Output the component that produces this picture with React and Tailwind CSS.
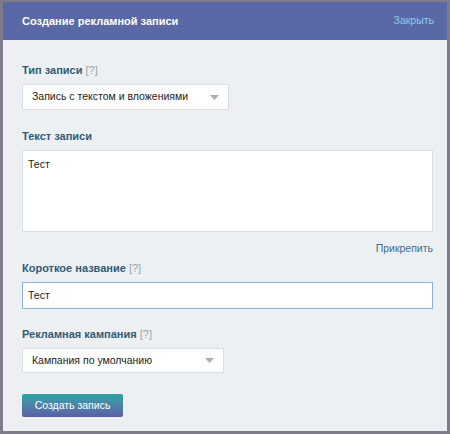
import React from 'react';

function Label({ children, hint }) {
  return (
    <div className="text-[11px] font-bold text-[#2f5a78] leading-[14px]">
      {children}
      {hint && <span className="font-normal text-[#9aa3ab]"> [?]</span>}
    </div>
  );
}

function Select({ value, width, height }) {
  return (
    <div
      className={`${width} ${height} bg-white border border-[#d9dee3] flex items-center justify-between pl-[9px] pr-[9px] text-[10.5px] text-[#222]`}
    >
      <span>{value}</span>
      <svg width="9" height="5" viewBox="0 0 9 5">
        <path d="M0 0 L9 0 L4.5 5 Z" fill="#a9afb5" />
      </svg>
    </div>
  );
}

export default function App() {
  return (
    <div
      className="w-[450px] h-[434px] bg-[#edf0f3] border-l-[3px] border-r-[3px] border-b-[3px] border-t-[2px] border-[#7c7c8c] flex flex-col"
      style={{ fontFamily: '"Liberation Sans", Arial, sans-serif' }}
    >
      <div className="h-[38px] bg-[#5a69a5] flex items-center justify-between pl-[19px] pr-[13px] shrink-0">
        <span className="text-white font-bold text-[11px]">Создание рекламной записи</span>
        <span className="text-[#8ccbea] text-[10.5px]">Закрыть</span>
      </div>

      <div className="flex flex-col pl-[19px] pr-[14px] pt-[23px]">
        <Label hint>Тип записи</Label>
        <div className="mt-[7px]">
          <Select value="Запись с текстом и вложениями" width="w-[207px]" height="h-[26px]" />
        </div>

        <div className="mt-[19px]">
          <Label>Текст записи</Label>
        </div>
        <div className="mt-[7px] h-[82px] bg-white border border-[#d9dee3] px-[5px] py-[6px] text-[10.5px] text-[#222] leading-[14px]">
          Тест
        </div>
        <div className="mt-[9px] text-right text-[10.5px] text-[#3f6d8c] leading-[14px]">Прикрепить</div>

        <div className="mt-[6px]">
          <Label hint>Короткое название</Label>
        </div>
        <div className="mt-[7px] h-[27px] bg-white border border-[#8fb0da] flex items-center px-[5px] text-[10.5px] text-[#222]">
          Тест
        </div>

        <div className="mt-[18px]">
          <Label hint>Рекламная кампания</Label>
        </div>
        <div className="mt-[7px]">
          <Select value="Кампания по умолчанию" width="w-[202px]" height="h-[25px]" />
        </div>

        <div className="mt-[19px]">
          <button className="w-[101px] h-[23px] rounded-[2px] bg-gradient-to-b from-[#27a4a6] to-[#5a5ea6] text-white text-[10.5px]">
            Создать запись
          </button>
        </div>
      </div>
    </div>
  );
}
